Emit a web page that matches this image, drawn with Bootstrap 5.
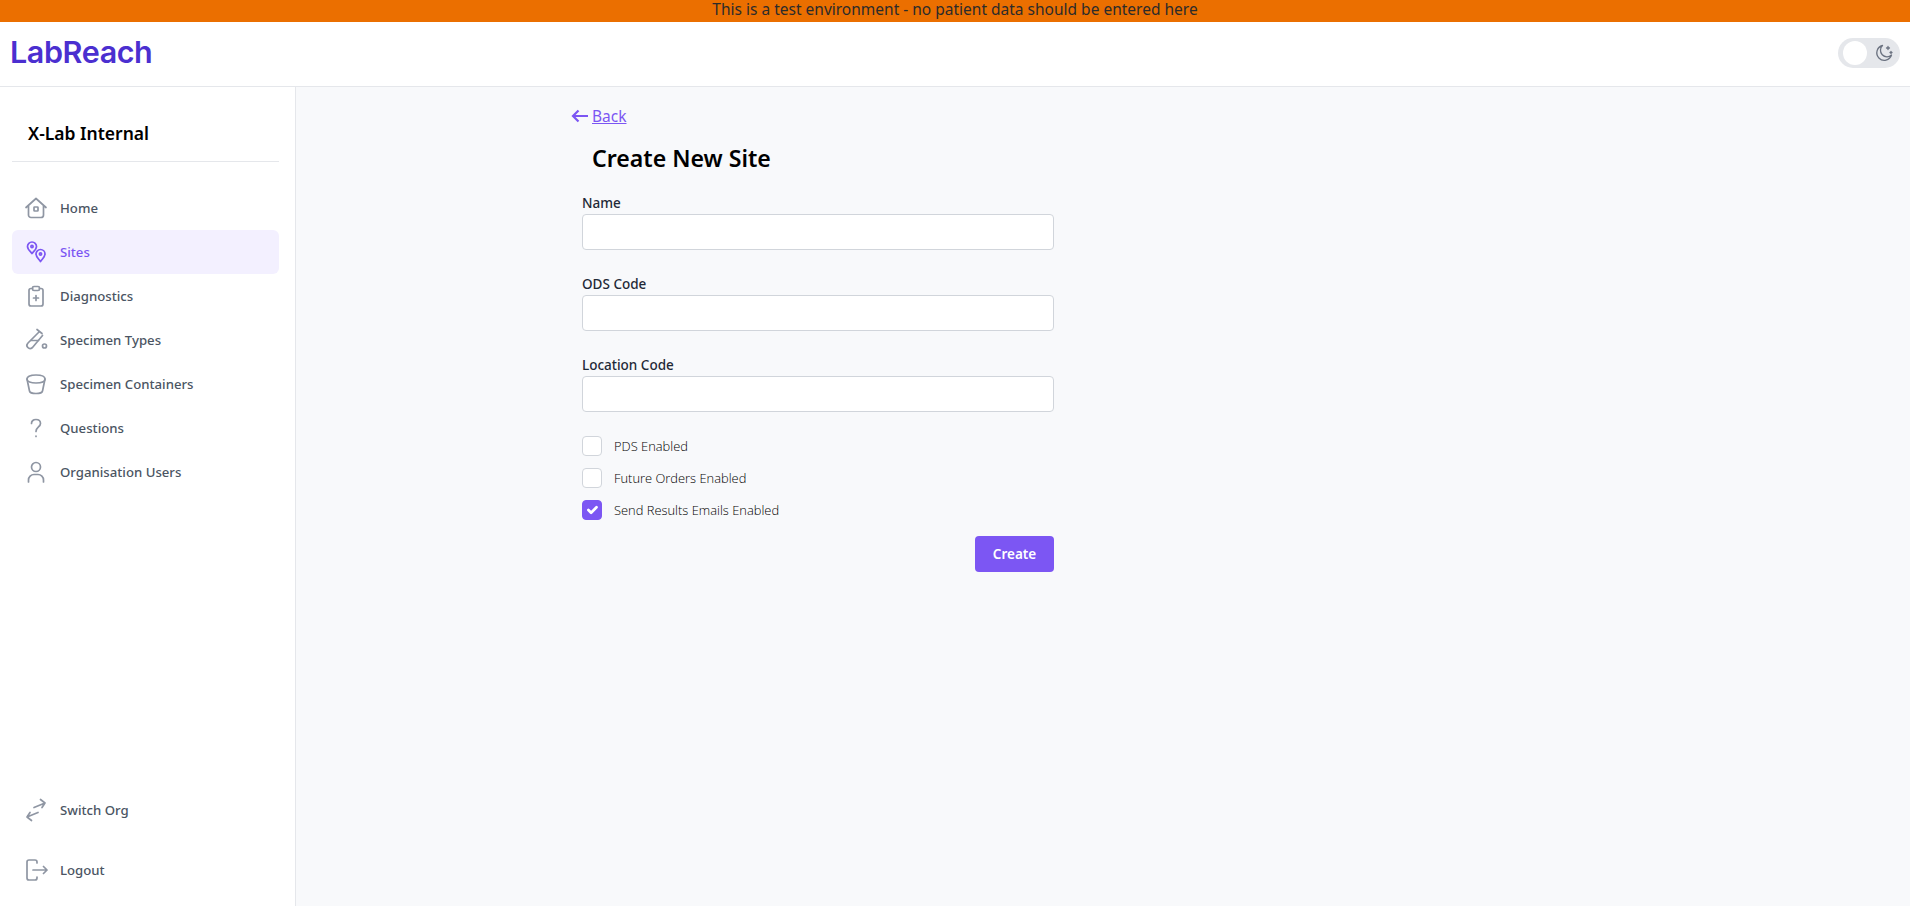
<!doctype html>
<html lang="en">
<head>
<meta charset="utf-8">
<title>LabReach</title>
<link href="https://cdn.jsdelivr.net/npm/bootstrap@5.3.0/dist/css/bootstrap.min.css" rel="stylesheet">
<style>
html,body{height:100%;}
body{font-family:"Noto Sans","Open Sans",sans-serif;background:#f8f9fb;overflow:hidden;}
.env-banner{height:22px;background:#eb6f00;color:#2b2b2b;font-size:15.5px;line-height:18px;text-align:center;}
.top-bar{height:65px;background:#fff;border-bottom:1px solid #e5e7eb;padding:0 10px 3px;}
.brand-word{font-family:Inter,sans-serif;font-weight:600;font-size:30.5px;letter-spacing:-.4px;color:#4b2fd0;line-height:1;}
.theme-toggle{width:62px;height:30px;border-radius:15px;background:#e5e7eb;padding:0 6px 0 5px;}
.theme-knob{width:24px;height:24px;border-radius:50%;background:#fff;}
.shell{height:calc(100vh - 87px);}
.side-col{width:296px;flex:none;background:#fff;border-right:1px solid #e5e7eb;padding:0 16px 0 12px;}
.org-title{font-size:17.500px;font-weight:600;color:#000;margin:0;padding:32px 0 14px 16px;line-height:28px;height:75px;border-bottom:1px solid #e5e7eb;}
.menu-list{margin-top:24px;gap:0;}
.menu-item{height:44px;border-radius:6px;color:#4b5563;font-size:13.200px;font-weight:500;padding:2px 0 0 12px;text-decoration:none;gap:12px;}
.menu-item svg{width:24px;height:24px;flex:none;margin-top:-2px;stroke:#8f96a3;fill:none;stroke-width:1.7;stroke-linecap:round;stroke-linejoin:round;}
.menu-item.is-on{background:#f3f0ff;color:#7c56f3;}
.menu-item.is-on svg{stroke:#7c56f3;}
.bottom-menu{gap:16px;padding-bottom:14px;}
.page-area{min-width:0;padding:18px 0 0 276px;}
.back-row{color:#7c56f3;font-size:15.500px;line-height:22px;}
.back-row a{color:#7c56f3;}
.back-row svg{width:17px;height:14px;stroke:#7c56f3;fill:none;stroke-width:2.2;margin-right:4px;margin-left:-1px;}
.form-pane{width:472px;margin-left:10px;}
.page-title{font-size:23.100px;font-weight:600;color:#000;margin:15px 0 18px 10px;line-height:33px;}
.field-label{font-size:13.500px;color:#1f2937;font-weight:500;line-height:20px;margin:0 0 1px;display:block;}
.field-input{height:36px;border:1px solid #d1d5db;border-radius:4px;background:#fff;box-shadow:none;}
.field-box{margin-bottom:24px;height:57px;}
.check-row{gap:12px;height:20px;margin-bottom:12px;font-family:"Open Sans",sans-serif;font-size:12.900px;font-weight:300;color:#000;padding:0;min-height:0;}
.check-row .form-check-input{width:20px;height:20px;margin:0;border:1px solid #d1d5db;border-radius:4px;flex:none;float:none;}
.check-row .form-check-input:checked{background-color:#7c56f3;border-color:#7c56f3;}
.check-row .form-check-label{line-height:20px;}
.submit-btn{width:79px;height:36px;background:#7c56f3;border:0;border-radius:4px;color:#fff;font-size:13.500px;font-weight:600;padding:0;}
.check-list{margin-top:0;}
</style>
</head>
<body>
<div class="env-banner">This is a test environment - no patient data should be entered here</div>
<header class="top-bar d-flex align-items-center justify-content-between">
  <span class="brand-word">LabReach</span>
  <div class="theme-toggle d-flex align-items-center justify-content-between">
    <span class="theme-knob"></span>
    <svg width="20" height="20" viewBox="0 0 20 20" fill="none" stroke="#6b7280" stroke-width="1.3" stroke-linecap="round" stroke-linejoin="round"><path d="M8.500 2.500a7.500 7.500 0 1 0 9 9.500A6.500 6.500 0 0 1 8.500 2.500z"/><path d="M14 3.500v3M12.500 5h3M17 8.500v2M16 9.500h2"/></svg>
  </div>
</header>
<div class="shell d-flex">
  <aside class="side-col d-flex flex-column">
    <h2 class="org-title">X-Lab Internal</h2>
    <nav class="menu-list d-flex flex-column flex-grow-1">
      <a class="menu-item d-flex align-items-center" href="#"><svg viewBox="0 0 24 24"><path d="M2 11.500 12 2.500l10 9M4.500 9.500V19a2.500 2.500 0 0 0 2.500 2.500h10a2.500 2.500 0 0 0 2.500-2.500V9.500"/><rect x="10" y="11" width="4" height="4" rx=".6"/></svg>Home</a>
      <a class="menu-item is-on d-flex align-items-center" href="#"><svg viewBox="0 0 24 24"><path d="M8 2a4.500 4.500 0 0 1 4.500 4.500c0 2.800-2.700 4.800-4.500 7-1.800-2.200-4.500-4.200-4.500-7A4.500 4.500 0 0 1 8 2z"/><circle cx="8" cy="6.500" r="1.100"/><path d="M16.500 9.500A4.500 4.500 0 0 1 21 14c0 2.800-2.700 4.800-4.500 7.500C14.700 18.800 12 16.800 12 14a4.500 4.500 0 0 1 4.500-4.500z"/><circle cx="16.500" cy="14" r="1.100"/></svg>Sites</a>
      <a class="menu-item d-flex align-items-center" href="#"><svg viewBox="0 0 24 24"><path d="M8.500 4.500H7a2 2 0 0 0-2 2V20a2 2 0 0 0 2 2h10a2 2 0 0 0 2-2V6.500a2 2 0 0 0-2-2h-1.500"/><rect x="8.500" y="2.500" width="7" height="4" rx="1.500"/><path d="M12 11.500v5M9.500 14h5"/></svg>Diagnostics</a>
      <a class="menu-item d-flex align-items-center" href="#"><svg viewBox="0 0 24 24"><path d="M13 1.500l5 4M15.500 3.500 4 15c-3 3 1 7.500 4.500 4.500L18.500 7.500"/><path d="M7 12.500h7.500"/><circle cx="20.500" cy="18" r="2"/></svg>Specimen Types</a>
      <a class="menu-item d-flex align-items-center" href="#"><svg viewBox="0 0 24 24"><path d="M3 7c0-2.500 4-4 9-4s9 1.500 9 4-4 4-9 4-9-1.500-9-4z"/><path d="M3 7l2.500 12c.3 1.500 3.300 2.500 6.500 2.500s6.200-1 6.500-2.500L21 7"/></svg>Specimen Containers</a>
      <a class="menu-item d-flex align-items-center" href="#"><svg viewBox="0 0 24 24"><path d="M7.500 7.500C7.500 5 9.500 3.500 12 3.500s4.500 1.500 4.500 4c0 3.500-4.500 3.500-4.500 8"/><path d="M12 20v.5"/></svg>Questions</a>
      <a class="menu-item d-flex align-items-center" href="#"><svg viewBox="0 0 24 24"><circle cx="12" cy="7" r="4.500"/><path d="M4.500 22v-2A5.500 5.500 0 0 1 10 14.500h4a5.500 5.500 0 0 1 5.500 5.500v2"/></svg>Organisation Users</a>
    </nav>
    <nav class="bottom-menu d-flex flex-column">
      <a class="menu-item d-flex align-items-center" href="#"><svg viewBox="0 0 24 24"><path d="M10 9.500 21 5M16.500 1.500 21 5l-3 4.500"/><path d="M14 14.500 3 19M7.500 22.500 3 19l3-4.500"/></svg>Switch Org</a>
      <a class="menu-item d-flex align-items-center" href="#"><svg viewBox="0 0 24 24"><path d="M13 5V4a2 2 0 0 0-2-2H5a2 2 0 0 0-2 2v16a2 2 0 0 0 2 2h6a2 2 0 0 0 2-2v-1"/><path d="M9 12h14M19.500 8.500 23 12l-3.500 3.500"/></svg>Logout</a>
    </nav>
  </aside>
  <main class="page-area flex-grow-1">
    <div class="back-row d-flex align-items-center"><svg viewBox="0 0 17 14"><path d="M17 7H2M7.500 1.500 2 7l5.500 5.500"/></svg><a href="#">Back</a></div>
    <div class="form-pane">
      <h1 class="page-title">Create New Site</h1>
      <form>
        <div class="field-box"><label class="field-label" for="f1">Name</label><input id="f1" class="form-control field-input" type="text"></div>
        <div class="field-box"><label class="field-label" for="f2">ODS Code</label><input id="f2" class="form-control field-input" type="text"></div>
        <div class="field-box"><label class="field-label" for="f3">Location Code</label><input id="f3" class="form-control field-input" type="text"></div>
        <div class="check-list">
          <div class="form-check check-row d-flex align-items-center"><input id="c1" class="form-check-input" type="checkbox"><label class="form-check-label" for="c1">PDS Enabled</label></div>
          <div class="form-check check-row d-flex align-items-center"><input id="c2" class="form-check-input" type="checkbox"><label class="form-check-label" for="c2">Future Orders Enabled</label></div>
          <div class="form-check check-row d-flex align-items-center"><input id="c3" class="form-check-input" type="checkbox" checked><label class="form-check-label" for="c3">Send Results Emails Enabled</label></div>
        </div>
        <div class="d-flex justify-content-end pt-1"><button type="button" class="btn submit-btn">Create</button></div>
      </form>
    </div>
  </main>
</div>
<script src="https://cdn.jsdelivr.net/npm/bootstrap@5.3.0/dist/js/bootstrap.bundle.min.js"></script>
</body>
</html>
